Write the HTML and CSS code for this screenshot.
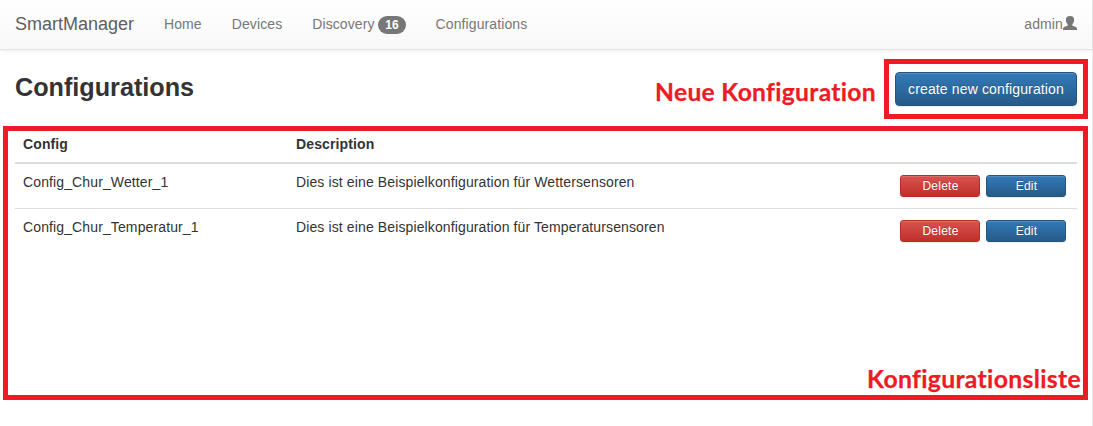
FILE: index.html
```html
<!DOCTYPE html>
<html lang="de">
<head>
<meta charset="utf-8">
<title>SmartManager</title>
<link rel="stylesheet" href="styles.css">
</head>
<body>
<div class="page">
  <nav class="navbar">
    <a class="brand">SmartManager</a>
    <a class="nav-link">Home</a>
    <a class="nav-link">Devices</a>
    <a class="nav-link">Discovery <span class="badge">16</span></a>
    <a class="nav-link">Configurations</a>
    <a class="user">admin<svg class="user-icon" viewBox="0 0 14 14"><path d="M7 0C9.800 0 11.200 1.500 11.100 4C11 6 10.300 7.500 9.300 8.400V9.400C10 10.200 13 10.500 13.800 11.800Q14 12.300 14 14H0Q0 12.300 .2 11.800C1 10.500 4 10.200 4.700 9.400V8.400C3.700 7.500 3 6 2.900 4C2.800 1.500 4.200 0 7 0Z"/></svg></a>
  </nav>
  <main>
    <header class="heading">
      <h1>Configurations</h1>
      <button class="btn primary large">create new configuration</button>
    </header>
    <section class="table">
      <div class="row head"><div>Config</div><div>Description</div></div>
      <div class="row">
        <div>Config_Chur_Wetter_1</div><div>Dies ist eine Beispielkonfiguration für Wettersensoren</div>
        <div class="actions"><button class="btn danger">Delete</button><button class="btn primary">Edit</button></div>
      </div>
      <div class="row">
        <div>Config_Chur_Temperatur_1</div><div>Dies ist eine Beispielkonfiguration für Temperatursensoren</div>
        <div class="actions"><button class="btn danger">Delete</button><button class="btn primary">Edit</button></div>
      </div>
    </section>
  </main>
</div>
<div class="frame frame-new"></div>
<div class="frame frame-list"></div>
<svg class="notes" viewBox="0 0 1093 426">
  <text x="655" y="101" textLength="221" lengthAdjust="spacingAndGlyphs">Neue Konfiguration</text>
  <text x="867" y="388" textLength="214" lengthAdjust="spacingAndGlyphs">Konfigurationsliste</text>
</svg>
</body>
</html>
```
FILE: styles.css
```css
* { box-sizing: border-box; }
body {
  margin: 0;
  font: 14px/20px "Liberation Sans", Arial, sans-serif;
  letter-spacing: .12px;
  color: #333;
  background: #fff;
  overflow: hidden;
}
.page { height: 426px; border-right: 1px solid #ebebeb; }
.navbar {
  display: flex;
  height: 50px;
  padding: 0 15px;
  border-bottom: 1px solid #e3e3e3;
  background: linear-gradient(#fff, #f8f8f8);
  box-shadow: 0 1px 5px rgba(0, 0, 0, .075);
  color: #777;
  text-shadow: 0 1px 0 rgba(255, 255, 255, .25);
}
.brand { font-size: 18px; line-height: 20px; padding: 14px 15px 0 0; width: 134px; color: #5e5e5e; letter-spacing: 0; }
.nav-link { padding: 14px 15px 0; letter-spacing: .1px; }
.badge {
  display: inline-block;
  min-width: 10px;
  padding: 3px 7px;
  border-radius: 10px;
  background: #777;
  color: #fff;
  font-size: 12px;
  font-weight: bold;
  line-height: 12px;
  letter-spacing: 0;
  margin-left: -.4px;
  vertical-align: middle;
  text-shadow: none;
}
.user { display: flex; margin-left: auto; padding-top: 14px; }
.user-icon { width: 14px; height: 14px; margin-top: 2px; fill: #777; }
main { padding: 22px 15px 0; }
.heading { display: flex; justify-content: space-between; }
h1 { margin: 0; font-size: 25.2px; line-height: 30px; letter-spacing: 0; }
.btn {
  width: 80px;
  height: 22px;
  padding: 0;
  border: 1px solid #245580;
  border-radius: 3px;
  color: #fff;
  font: 12px/18px "Liberation Sans", Arial, sans-serif;
  letter-spacing: .25px;
  text-indent: 1px;
  text-shadow: 0 -1px 0 rgba(0, 0, 0, .2);
  box-shadow: inset 0 1px 0 rgba(255, 255, 255, .15), 0 1px 1px rgba(0, 0, 0, .075);
}
.primary { background: linear-gradient(#337ab7, #265a88); }
.danger { background: linear-gradient(#d9534f, #c12e2a); border-color: #b92c28; }
.large { width: 182px; height: 34px; border-radius: 4px; font-size: 14px; line-height: 20px; letter-spacing: .14px; text-indent: 0; }
.table { margin-top: 20px; }
.row {
  display: grid;
  grid-template-columns: 273px 604px 1fr;
  height: 45px;
  padding: 8px 0 0 8px;
}
.row + .row { border-top: 1px solid #ddd; }
.head { height: 36px; font-weight: bold; }
.head + .row { height: 46px; border-top: 2px solid #ddd; }
.actions { display: flex; gap: 6px; padding-top: 3px; }
.frame { position: absolute; border: 5px solid #ed1c24; }
.frame-new { left: 884px; top: 59px; width: 204px; height: 60px; }
.frame-list { left: 3px; top: 126px; width: 1085px; height: 274px; }
.notes { position: absolute; left: 0; top: 0; width: 1093px; height: 426px; pointer-events: none; }
.notes text {
  font: bold 24.5px Lato, sans-serif;
  font-variant-ligatures: none;
  letter-spacing: .3px;
  fill: #ed1c24;
  stroke: #ed1c24;
  stroke-width: .25px;
}
```
